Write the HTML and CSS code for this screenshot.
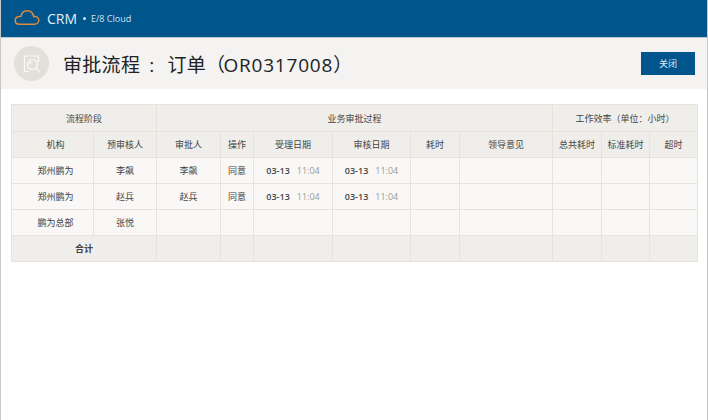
FILE: index.html
```html
<!DOCTYPE html>
<html lang="zh-CN">
<head>
    <meta charset="UTF-8">
    <title>审批流程</title>
    <link rel="stylesheet" href="styles.css">
</head>
<body>
    <div class="topbar">
        <svg class="cloud" width="26" height="18" viewBox="0 0 26 18" fill="none">
            <path d="M5.5 14.2H20.5C23 14.2 24.8 12.4 24.8 10.2C24.8 8 23 6.4 20.8 6.4C20.4 6.4 20 6.5 19.7 6.6C19 3 16.4 0.8 13.2 0.8C10 0.8 7.6 3 7 6.3C3.6 6.4 1.2 8 1.2 10.4C1.2 12.6 3 14.2 5.5 14.2Z" stroke="#e08a3c" stroke-width="1.5"/>
        </svg>
        <span class="brand">CRM</span>
        <span class="dot"></span>
        <span class="sub">E/8 Cloud</span>
    </div>

    <div class="titlebar">
        <div class="avatar">
            <svg width="18" height="18" viewBox="0 0 18 18" fill="none" stroke="#fbfaf8" stroke-width="1.2">
                <path d="M6 1H1.5V16.5H6M7 1H15.5V7"/>
                <circle cx="9.5" cy="9.5" r="5"/>
                <path d="M13 13L16.5 17"/>
                <path d="M7 9.5A2.6 2.6 0 0 1 9.5 7"/>
            </svg>
        </div>
        <h1>审批流程<span class="sep">:</span>订单（<span class="code">OR0317008</span>）</h1>
        <button class="close-btn">关闭</button>
    </div>

    <div class="content">
        <table class="flow">
            <colgroup>
                <col class="w82"><col class="w63"><col class="w64"><col class="w33"><col class="w79">
                <col class="w78"><col class="w49"><col class="w93"><col class="w49"><col class="w48"><col class="w48">
            </colgroup>
            <tr class="head first">
                <th colspan="2">流程阶段</th>
                <th colspan="6">业务审批过程</th>
                <th colspan="3">工作效率（单位：小时）</th>
            </tr>
            <tr class="head">
                <th class="org">机构</th>
                <th>预审核人</th>
                <th>审批人</th>
                <th>操作</th>
                <th>受理日期</th>
                <th>审核日期</th>
                <th>耗时</th>
                <th>领导意见</th>
                <th>总共耗时</th>
                <th>标准耗时</th>
                <th>超时</th>
            </tr>
            <tr>
                <td class="org">郑州鹏为</td>
                <td>李飙</td>
                <td>李飙</td>
                <td>同意</td>
                <td><b>03-13</b><i>11:04</i></td>
                <td><b>03-13</b><i>11:04</i></td>
                <td></td><td></td><td></td><td></td><td></td>
            </tr>
            <tr>
                <td class="org">郑州鹏为</td>
                <td>赵兵</td>
                <td>赵兵</td>
                <td>同意</td>
                <td><b>03-13</b><i>11:04</i></td>
                <td><b>03-13</b><i>11:04</i></td>
                <td></td><td></td><td></td><td></td><td></td>
            </tr>
            <tr>
                <td class="org">鹏为总部</td>
                <td>张悦</td>
                <td></td><td></td><td></td><td></td><td></td><td></td><td></td><td></td><td></td>
            </tr>
            <tr class="total">
                <td colspan="2">合计</td>
                <td></td><td></td><td></td><td></td><td></td><td></td><td></td><td></td><td></td>
            </tr>
        </table>
    </div>
</body>
</html>
```

FILE: styles.css
```css
html, body {
    margin: 0;
    padding: 0;
}
body {
    width: 708px;
    height: 420px;
    box-sizing: border-box;
    overflow: hidden;
    background-color: #fff;
    border-left: 1px solid #c8c8c8;
    border-right: 1px solid #c8c8c8;
    font-family: "Liberation Sans", "Noto Sans CJK SC", sans-serif;
}
.topbar {
    height: 37px;
    display: flex;
    align-items: center;
    background-color: #00558c;
    border-bottom: 1px solid #bcc7cf;
    color: #fff;
    padding-left: 13px;
}
.cloud {
    margin-right: 7px;
}
.brand {
    font-family: "Open Sans", sans-serif;
    font-size: 14px;
    color: #e6eef4;
}
.dot {
    width: 3px;
    height: 3px;
    border-radius: 50%;
    background-color: #d5e2ec;
    margin: 0 5px 0 6px;
}
.sub {
    font-family: "Open Sans", sans-serif;
    font-size: 9px;
    color: #d5e2ec;
}
.titlebar {
    height: 51px;
    display: flex;
    align-items: center;
    background-color: #f4f3f2;
    padding: 0 12px 0 13px;
}
.avatar {
    width: 35px;
    height: 35px;
    border-radius: 50%;
    background-color: #e3e0db;
    display: flex;
    align-items: center;
    justify-content: center;
    margin-right: 14px;
}
h1 {
    flex: 1;
    margin: 0;
    font-size: 19px;
    font-weight: normal;
    color: #222;
    letter-spacing: 0.3px;
    font-family: "Open Sans", "Noto Sans CJK SC", sans-serif;
}
.sep {
    margin: 0 13px 0 9px;
}
.code {
    margin-left: -2px;
    letter-spacing: 0.8px;
}
.close-btn {
    width: 54px;
    height: 23px;
    border: none;
    padding: 0;
    background-color: #00558c;
    color: #dfe9f0;
    font-size: 9px;
    font-family: "Noto Sans CJK SC", sans-serif;
}
.content {
    padding: 15px 10px 0;
}
.flow {
    width: 686px;
    table-layout: fixed;
    border-collapse: collapse;
    font-family: "Noto Sans CJK SC", sans-serif;
    font-size: 9px;
    color: #444;
}
.flow th, .flow td {
    height: 25px;
    padding: 0;
    border: 1px solid #e6e2dc;
    text-align: center;
    background-color: #faf8f6;
    font-weight: normal;
}
.flow .org {
    padding-left: 6px;
}
.flow .head th {
    background-color: #f0eeea;
}
.flow .first th {
    height: 26px;
}
.flow .total td {
    background-color: #f0eeea;
    font-weight: bold;
}
.flow b {
    font-family: "Open Sans", sans-serif;
    font-weight: 600;
    color: #444;
    margin-right: 7px;
}
.flow i {
    font-family: "Open Sans", sans-serif;
    font-style: normal;
    color: #999;
}
.w82 { width: 82px; }
.w63 { width: 63px; }
.w64 { width: 64px; }
.w33 { width: 33px; }
.w79 { width: 79px; }
.w78 { width: 78px; }
.w49 { width: 49px; }
.w93 { width: 93px; }
.w48 { width: 48px; }
```
